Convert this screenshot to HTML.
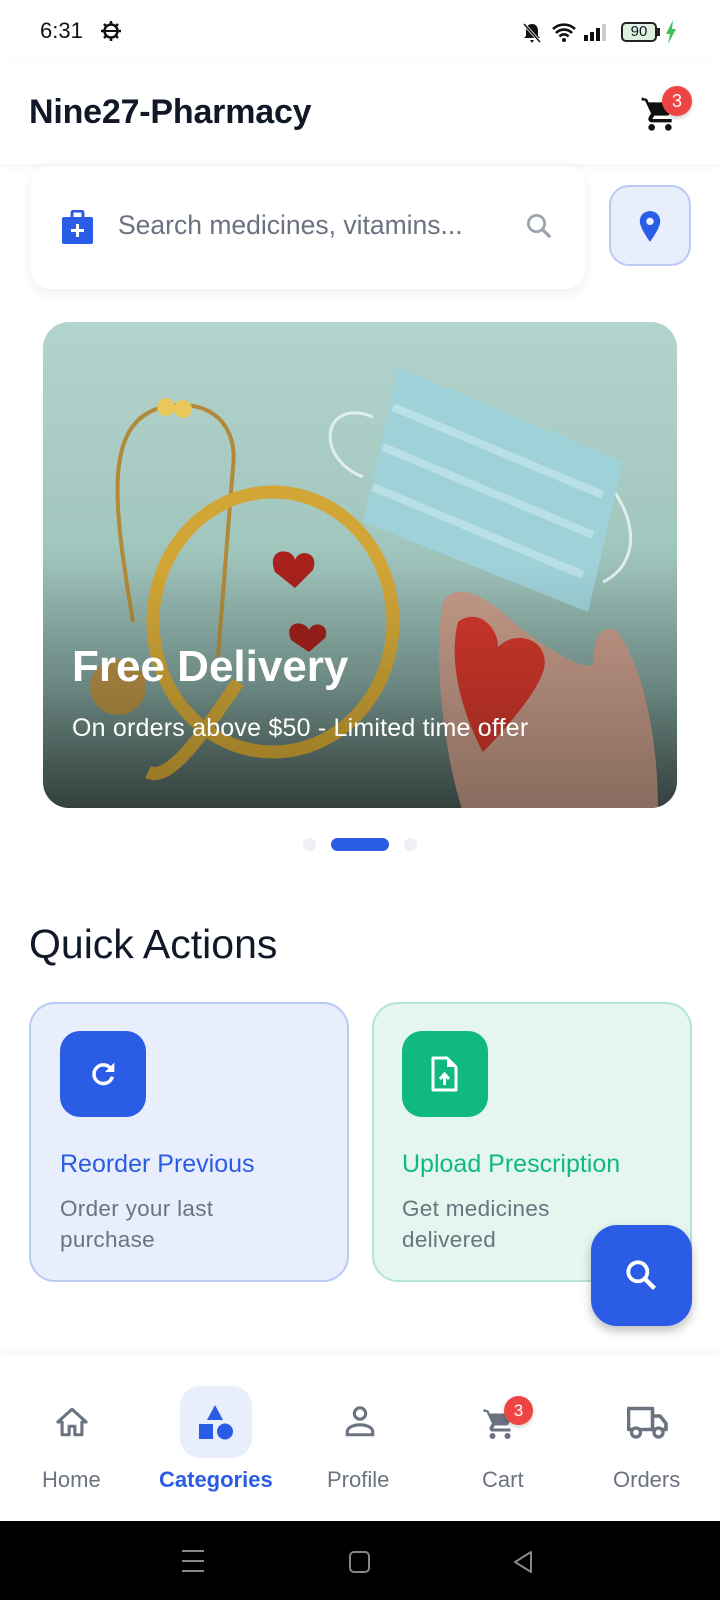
<!DOCTYPE html>
<html><head><meta charset="utf-8"><style>
*{margin:0;padding:0;box-sizing:border-box}
body{width:720px;height:1600px;background:#fff;font-family:"Liberation Sans",sans-serif;position:relative;overflow:hidden;color:#111827}
.abs{position:absolute}
</style></head><body>
<!-- status bar -->
<div class="abs" style="left:40px;top:18px;font-size:22px;color:#111">6:31</div>
<svg class="abs" style="left:100px;top:20px" width="22" height="22" viewBox="0 0 22 22"><circle cx="11" cy="11" r="6.5" fill="none" stroke="#111" stroke-width="2.5"/><path d="M11 1v4M11 17v4M1 11h4M17 11h4M4 4l3 3M15 15l3 3M4 18l3-3M15 7l3-3" stroke="#111" stroke-width="2.5"/><path d="M5 11h12" stroke="#111" stroke-width="2"/></svg>
<svg class="abs" style="left:522px;top:22px" width="20" height="22" viewBox="0 0 20 22"><path d="M10 2c-4 0-6 3-6 7v5l-2 2h16l-2-2V9c0-4-2-7-6-7zM8 18h4l-2 3z" fill="#111"/><path d="M2 2l16 18" stroke="#fff" stroke-width="3"/><path d="M2 2l16 18" stroke="#111" stroke-width="1.5"/></svg>
<svg class="abs" style="left:552px;top:22px" width="26" height="20" viewBox="0 0 26 20"><path d="M1 7a16 16 0 0 1 22 0M4 11a11 11 0 0 1 16 0M7.5 14.5a6 6 0 0 1 9 0" fill="none" stroke="#111" stroke-width="2.6"/><circle cx="12" cy="18" r="2" fill="#111"/></svg>
<svg class="abs" style="left:584px;top:22px" width="26" height="20"><rect x="0" y="13" width="4" height="6" fill="#111"/><rect x="6" y="10" width="4" height="9" fill="#111"/><rect x="12" y="6" width="4" height="13" fill="#111"/><rect x="18" y="2" width="4" height="17" fill="#ccc"/></svg>
<div class="abs" style="left:621px;top:22px;width:36px;height:20px;border:2px solid #222;border-radius:5px;background:#dff0df;font-size:15px;text-align:center;line-height:16px">90</div>
<div class="abs" style="left:657px;top:28px;width:3px;height:8px;background:#222"></div>
<svg class="abs" style="left:665px;top:20px" width="12" height="24"><path d="M8 0L1 14h4l-2 10 8-15H7z" fill="#3fbf5f"/></svg>
<!-- header -->
<div class="abs" style="left:0;top:60px;width:720px;height:104px;background:#fff;box-shadow:0 2px 8px rgba(0,0,0,.05)"></div>
<div class="abs" style="left:29px;top:93px;font-size:34px;font-weight:bold;color:#111827;letter-spacing:-.2px">Nine27-Pharmacy</div>
<svg class="abs" style="left:640px;top:94px" width="40" height="40" viewBox="0 0 24 24"><path d="M7 18a2 2 0 1 0 0 4 2 2 0 0 0 0-4zM1 2v2h2l3.6 7.6L5.2 14c-.1.3-.2.6-.2 1 0 1.1.9 2 2 2h12v-2H7.4l1.1-2h7.5c.8 0 1.4-.4 1.7-1L21.3 5H5.2L4.3 3z M17 18a2 2 0 1 0 0 4 2 2 0 0 0 0-4z" fill="#111"/></svg>
<div class="abs" style="left:662px;top:86px;width:30px;height:30px;border-radius:50%;background:#ef4444;color:#fff;font-size:18px;text-align:center;line-height:30px;box-shadow:0 2px 4px rgba(0,0,0,.2)">3</div>
<!-- search -->
<div class="abs" style="left:31px;top:166px;width:554px;height:123px;background:#fff;border-radius:20px;box-shadow:0 4px 14px rgba(0,0,0,.07)"></div>
<svg class="abs" style="left:62px;top:210px" width="31" height="34" viewBox="0 0 31 34"><rect x="10" y="1" width="11" height="8" rx="2" fill="none" stroke="#2b5ce6" stroke-width="3"/><rect x="0" y="7" width="31" height="27" rx="2" fill="#2b5ce6"/><path d="M15.5 14v13M9 20.5h13" stroke="#fff" stroke-width="3"/></svg>
<div class="abs" style="left:118px;top:210px;font-size:26.5px;color:#6b7280">Search medicines, vitamins...</div>
<svg class="abs" style="left:524px;top:211px" width="30" height="30" viewBox="0 0 24 24"><circle cx="10" cy="10" r="6.5" fill="none" stroke="#9ca3af" stroke-width="2.2"/><path d="M15 15l6 6" stroke="#9ca3af" stroke-width="2.6"/></svg>
<div class="abs" style="left:609px;top:185px;width:82px;height:81px;background:#e8eefb;border:2px solid #b9caf5;border-radius:20px"></div>
<svg class="abs" style="left:636px;top:210px" width="28" height="34" viewBox="0 0 24 30"><path d="M12 1C6.5 1 3 5 3 10c0 6 9 18 9 18s9-12 9-18c0-5-3.5-9-9-9z" fill="#2b5ce6"/><circle cx="12" cy="10" r="3.3" fill="#e8eefb"/></svg>
<!-- banner -->
<svg class="abs" style="left:43px;top:322px" width="634" height="486" viewBox="0 0 634 486">
<defs><clipPath id="c"><rect width="634" height="486" rx="26"/></clipPath>
<linearGradient id="bg" x1="0" y1="0" x2="0" y2="1"><stop offset="0" stop-color="#b3d3cd"/><stop offset=".45" stop-color="#a2c7be"/><stop offset=".75" stop-color="#7d9e97"/><stop offset="1" stop-color="#4a5c58"/></linearGradient>
<linearGradient id="ov" x1="0" y1="0" x2="0" y2="1"><stop offset=".5" stop-color="#000" stop-opacity="0"/><stop offset="1" stop-color="#000" stop-opacity=".3"/></linearGradient></defs>
<g clip-path="url(#c)">
<rect width="634" height="486" fill="url(#bg)"/>
<path d="M330 95c-50-20-60 40-10 60" fill="none" stroke="#dfeeea" stroke-width="3"/>
<path d="M555 150c40 40 45 90 5 110" fill="none" stroke="#dfeeea" stroke-width="3"/>
<polygon points="355,45 580,140 545,290 320,200" fill="#9fd1d8"/>
<path d="M350 85l210 88M340 125l210 88M330 165l210 88" stroke="#b9e0e4" stroke-width="8"/>
<path d="M90 300c-20-120-30-200 30-215 50-10 75 20 70 60l-15 190" fill="none" stroke="#b08a3a" stroke-width="4"/>
<circle cx="123" cy="85" r="9" fill="#e8c85a"/><circle cx="140" cy="87" r="9" fill="#e8c85a"/>
<ellipse cx="230" cy="300" rx="120" ry="130" fill="none" stroke="#d1a636" stroke-width="13"/>
<path d="M195 360c-40 60-70 100-90 90" fill="none" stroke="#d1a636" stroke-width="13"/>
<circle cx="75" cy="365" r="28" fill="#b58f45"/>
<path d="M232 250c-10-25 18-25 20-12 4-12 25-8 18 10l-18 18z" fill="#a8211c"/>
<path d="M248 318c-8-20 14-20 18-10 4-10 22-6 16 8l-16 14z" fill="#9e1f1a"/>
<path d="M400 280c10-20 40-10 70 20 50 40 80 50 80 40 0-25 10-40 25-30 20 30 40 90 40 180H420c-20-60-30-160-20-210z" fill="#c49a88"/>
<path d="M415 300c20-15 40 5 40 25 20-20 55-5 45 25-10 30-60 80-60 80s-40-70-25-130z" fill="#d1372b"/>
<rect width="634" height="486" fill="url(#ov)"/>
</g></svg>
<div class="abs" style="left:72px;top:642px;font-size:44px;font-weight:bold;color:#fff">Free Delivery</div>
<div class="abs" style="left:72px;top:714px;font-size:25px;color:#fff;letter-spacing:.2px">On orders above $50 - Limited time offer</div>
<!-- dots -->
<div class="abs" style="left:303px;top:838px;width:13px;height:13px;border-radius:50%;background:#eef0f3"></div>
<div class="abs" style="left:331px;top:838px;width:58px;height:13px;border-radius:7px;background:#2b5ce6"></div>
<div class="abs" style="left:404px;top:838px;width:13px;height:13px;border-radius:50%;background:#eef0f3"></div>
<!-- quick actions -->
<div class="abs" style="left:29px;top:921px;font-size:41px;color:#111827">Quick Actions</div>
<div class="abs" style="left:29px;top:1002px;width:320px;height:280px;background:#e8eefb;border:2px solid #b9caf5;border-radius:26px"></div>
<div class="abs" style="left:60px;top:1031px;width:86px;height:86px;background:#2b5ce6;border-radius:20px"></div>
<svg class="abs" style="left:87px;top:1058px" width="32" height="32" viewBox="0 0 24 24"><path d="M18.5 9A7 7 0 1 0 19 14" fill="none" stroke="#fff" stroke-width="2.6"/><path d="M20.5 3.5v7h-7z" fill="#fff"/></svg>
<div class="abs" style="left:60px;top:1150px;font-size:25px;color:#2b5ce6">Reorder Previous</div>
<div class="abs" style="left:60px;top:1193px;font-size:22.5px;color:#6b7280;line-height:31px;letter-spacing:.3px">Order your last<br>purchase</div>
<div class="abs" style="left:372px;top:1002px;width:320px;height:280px;background:#e5f6ef;border:2px solid #b4e5cf;border-radius:26px"></div>
<div class="abs" style="left:402px;top:1031px;width:86px;height:86px;background:#10b981;border-radius:20px"></div>
<svg class="abs" style="left:430px;top:1056px" width="30" height="36" viewBox="0 0 30 36"><path d="M3 2h14l9 9v23H3z" fill="none" stroke="#fff" stroke-width="3" stroke-linejoin="round"/><path d="M17 2v9h9" fill="#fff"/><path d="M14.5 29V19M10 23l4.5-5 4.5 5" fill="none" stroke="#fff" stroke-width="3"/></svg>
<div class="abs" style="left:402px;top:1150px;font-size:25px;color:#10b981">Upload Prescription</div>
<div class="abs" style="left:402px;top:1193px;font-size:22.5px;color:#6b7280;line-height:31px;letter-spacing:.3px">Get medicines<br>delivered</div>
<!-- FAB -->
<div class="abs" style="left:591px;top:1225px;width:101px;height:101px;background:#2b5ce6;border-radius:26px;box-shadow:0 5px 10px rgba(0,0,0,.25)"></div>
<svg class="abs" style="left:622px;top:1256px" width="38" height="38" viewBox="0 0 24 24"><circle cx="10" cy="10" r="6" fill="none" stroke="#fff" stroke-width="2.4"/><path d="M14.5 14.5l6 6" stroke="#fff" stroke-width="2.8"/></svg>
<!-- bottom nav -->
<div class="abs" style="left:0;top:1355px;width:720px;height:166px;background:#fff;box-shadow:0 -3px 8px rgba(0,0,0,.05)"></div>
<svg class="abs" style="left:55px;top:1406px" width="34" height="32" viewBox="0 0 24 22"><path d="M12 2L2 11h3v9h5v-6h4v6h5v-9h3z" fill="none" stroke="#6b7280" stroke-width="2.2" stroke-linejoin="round"/></svg>
<div class="abs" style="left:42px;top:1467px;font-size:22px;color:#6b7280">Home</div>
<div class="abs" style="left:180px;top:1386px;width:72px;height:72px;background:#e8eefb;border-radius:20px"></div>
<svg class="abs" style="left:198px;top:1404px" width="36" height="36" viewBox="0 0 36 36"><path d="M17 1l8 15H9z" fill="#2b5ce6"/><rect x="1" y="20" width="14" height="15" fill="#2b5ce6"/><circle cx="27" cy="27.5" r="8" fill="#2b5ce6"/></svg>
<div class="abs" style="left:159px;top:1467px;font-size:22px;font-weight:bold;color:#2b5ce6">Categories</div>
<svg class="abs" style="left:343px;top:1405px" width="34" height="34" viewBox="0 0 24 24"><circle cx="12" cy="6" r="4" fill="none" stroke="#6b7280" stroke-width="2.2"/><path d="M3 21v-2c0-3 4-5 9-5s9 2 9 5v2z" fill="none" stroke="#6b7280" stroke-width="2.2"/></svg>
<div class="abs" style="left:327px;top:1467px;font-size:22px;color:#6b7280">Profile</div>
<svg class="abs" style="left:482px;top:1406px" width="36" height="36" viewBox="0 0 24 24"><path d="M7 18a2 2 0 1 0 0 4 2 2 0 0 0 0-4zM1 2v2h2l3.6 7.6L5.2 14c-.1.3-.2.6-.2 1 0 1.1.9 2 2 2h12v-2H7.4l1.1-2h7.5c.8 0 1.4-.4 1.7-1L21.3 5H5.2L4.3 3z M17 18a2 2 0 1 0 0 4 2 2 0 0 0 0-4z" fill="#6b7280"/></svg>
<div class="abs" style="left:504px;top:1396px;width:29px;height:29px;border-radius:50%;background:#ef4444;color:#fff;font-size:17px;text-align:center;line-height:29px;box-shadow:0 2px 4px rgba(0,0,0,.2)">3</div>
<div class="abs" style="left:482px;top:1467px;font-size:22px;color:#6b7280">Cart</div>
<svg class="abs" style="left:627px;top:1404px" width="42" height="36" viewBox="0 0 28 24"><path d="M1 3h16v14H1zM17 8h5l4 5v4h-9z" fill="none" stroke="#6b7280" stroke-width="2.4" stroke-linejoin="round"/><circle cx="6" cy="19" r="3" fill="#fff" stroke="#6b7280" stroke-width="2.2"/><circle cx="21" cy="19" r="3" fill="#fff" stroke="#6b7280" stroke-width="2.2"/></svg>
<div class="abs" style="left:613px;top:1467px;font-size:22px;color:#6b7280">Orders</div>
<!-- system nav -->
<div class="abs" style="left:0;top:1521px;width:720px;height:79px;background:#000"></div>
<div class="abs" style="left:182px;top:1550px;width:22px;height:22px;border-top:2px solid #888;border-bottom:2px solid #888"></div>
<div class="abs" style="left:182px;top:1560px;width:22px;height:2px;background:#888"></div>
<div class="abs" style="left:349px;top:1551px;width:21px;height:22px;border:2px solid #888;border-radius:5px"></div>
<svg class="abs" style="left:512px;top:1550px" width="22" height="24"><path d="M19 2L3 12l16 10z" fill="none" stroke="#888" stroke-width="2" stroke-linejoin="round"/></svg>
</body></html>
